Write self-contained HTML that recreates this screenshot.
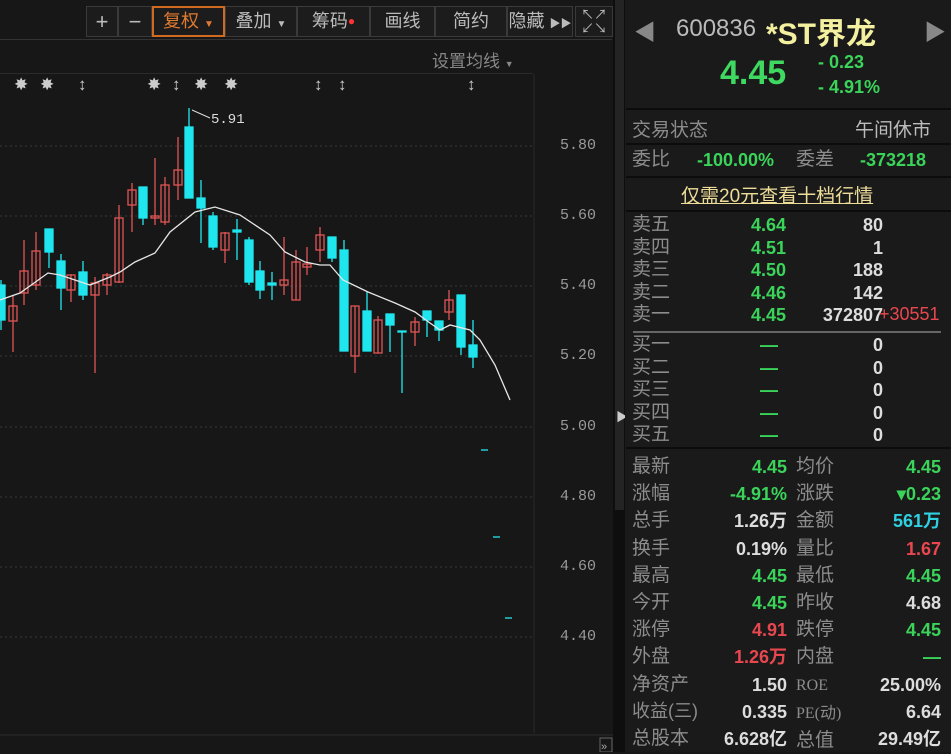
<!DOCTYPE html>
<html><head><meta charset="utf-8"><style>
*{margin:0;padding:0;box-sizing:border-box}
body{width:951px;height:752px;background:#171717;overflow:hidden;position:relative;font-family:"Liberation Sans","Noto Sans CJK SC",sans-serif}
.a{position:absolute;white-space:nowrap}
.lbl{color:#8c8c8c;font-size:19px}
.g{color:#3bd45a;font-weight:bold}
.w{color:#ddd;font-weight:bold}
.r{color:#e8474f;font-weight:bold}
.c{color:#2fd0e0;font-weight:bold}
.btn{position:absolute;top:6px;height:31px;border:1px solid #3a3a3a;color:#bbb;font-size:18px;text-align:center;line-height:29px;background:#1c1c1c}
.ax{position:absolute;left:560px;color:#9a9a9a;font-family:"Liberation Mono",monospace;font-size:15px}
.m{position:absolute;top:75px;color:#ccc;font-size:17px}
</style></head><body>
<div class="a" style="left:0;top:39px;width:612px;height:1px;background:#333"></div>
<div class="a" style="left:0;top:73px;width:533px;height:1px;background:#2a2a2a"></div>
<div class="btn" style="left:86px;width:32px;font-size:22px">+</div>
<div class="btn" style="left:118px;width:34px;font-size:22px">−</div>
<div class="btn" style="left:152px;width:73px;border:2px solid #d06a20;color:#e07a30;line-height:27px">复权 <span style="font-size:10px">▼</span></div>
<div class="btn" style="left:225px;width:72px">叠加 <span style="font-size:10px">▼</span></div>
<div class="btn" style="left:297px;width:73px">筹码<span style="color:#f33;font-size:12px;vertical-align:top">●</span></div>
<div class="btn" style="left:370px;width:65px">画线</div>
<div class="btn" style="left:435px;width:72px">简约</div>
<div class="btn" style="left:507px;width:66px">隐藏 <span style="font-size:11px">▶▶</span></div>
<div class="btn" style="left:575px;width:38px;font-size:13px;line-height:14px;padding-top:1px">↖↗<br>↙↘</div>
<div class="a" style="left:432px;top:47px;color:#888;font-size:17px">设置均线 <span style="font-size:9px">▼</span></div>
<div class="m" style="left:14px">✸</div>
<div class="m" style="left:40px">✸</div>
<div class="m" style="left:78px">↕</div>
<div class="m" style="left:147px">✸</div>
<div class="m" style="left:172px">↕</div>
<div class="m" style="left:194px">✸</div>
<div class="m" style="left:224px">✸</div>
<div class="m" style="left:314px">↕</div>
<div class="m" style="left:338px">↕</div>
<div class="m" style="left:467px">↕</div>
<svg class="a" style="left:0;top:0" width="613" height="752">
<g stroke="#3a3a3a" stroke-dasharray="2,3" stroke-width="1">
<line x1="0" y1="146" x2="533" y2="146"/><line x1="0" y1="216" x2="533" y2="216"/><line x1="0" y1="286" x2="533" y2="286"/><line x1="0" y1="356" x2="533" y2="356"/><line x1="0" y1="427" x2="533" y2="427"/><line x1="0" y1="497" x2="533" y2="497"/><line x1="0" y1="567" x2="533" y2="567"/><line x1="0" y1="637" x2="533" y2="637"/>
</g>
<line x1="534" y1="74" x2="534" y2="733" stroke="#2a2a2a"/>
<line x1="0" y1="735" x2="613" y2="735" stroke="#2e2e2e"/>
<rect x="600" y="738" width="12" height="14" fill="none" stroke="#666"/>
<text x="601" y="750" fill="#aaa" font-size="11">»</text>
<g stroke="#e05555" fill="none" stroke-width="1.3">
<line x1="13" y1="295" x2="13" y2="352"/><rect x="9" y="306" width="8" height="15"/>
<line x1="24" y1="240" x2="24" y2="305"/><rect x="20" y="271" width="8" height="22"/>
<line x1="36" y1="232" x2="36" y2="290"/><rect x="32" y="251" width="8" height="34"/>
<line x1="71" y1="274" x2="71" y2="302"/><rect x="67" y="275" width="8" height="15"/>
<line x1="95" y1="277" x2="95" y2="373"/><rect x="91" y="283" width="8" height="12"/>
<line x1="107" y1="273" x2="107" y2="295"/><rect x="103" y="275" width="8" height="10"/>
<line x1="119" y1="205" x2="119" y2="283"/><rect x="115" y="218" width="8" height="64"/>
<line x1="132" y1="183" x2="132" y2="232"/><rect x="128" y="190" width="8" height="15"/>
<line x1="155" y1="158" x2="155" y2="225"/><rect x="151" y="216" width="8" height="2"/>
<line x1="165" y1="177" x2="165" y2="225"/><rect x="161" y="185" width="8" height="37"/>
<line x1="178" y1="137" x2="178" y2="200"/><rect x="174" y="170" width="8" height="15"/>
<line x1="225" y1="232" x2="225" y2="263"/><rect x="221" y="233" width="8" height="17"/>
<line x1="284" y1="237" x2="284" y2="295"/><rect x="280" y="280" width="8" height="5"/>
<line x1="296" y1="250" x2="296" y2="300"/><rect x="292" y="262" width="8" height="38"/>
<line x1="307" y1="247" x2="307" y2="275"/><rect x="303" y="264" width="8" height="3"/>
<line x1="320" y1="227" x2="320" y2="262"/><rect x="316" y="235" width="8" height="15"/>
<line x1="355" y1="306" x2="355" y2="373"/><rect x="351" y="306" width="8" height="50"/>
<line x1="378" y1="316" x2="378" y2="353"/><rect x="374" y="320" width="8" height="33"/>
<line x1="415" y1="317" x2="415" y2="346"/><rect x="411" y="322" width="8" height="10"/>
<line x1="449" y1="290" x2="449" y2="320"/><rect x="445" y="300" width="8" height="12"/>
</g>
<g stroke="#1fe6ee" fill="#1fe6ee" stroke-width="1.3">
<line x1="1" y1="280" x2="1" y2="330"/><rect x="-3" y="285" width="8" height="35"/>
<line x1="49" y1="229" x2="49" y2="268"/><rect x="45" y="229" width="8" height="23"/>
<line x1="61" y1="254" x2="61" y2="310"/><rect x="57" y="261" width="8" height="27"/>
<line x1="83" y1="261" x2="83" y2="300"/><rect x="79" y="272" width="8" height="23"/>
<line x1="143" y1="187" x2="143" y2="225"/><rect x="139" y="187" width="8" height="31"/>
<line x1="189" y1="108" x2="189" y2="198"/><rect x="185" y="127" width="8" height="71"/>
<line x1="201" y1="180" x2="201" y2="243"/><rect x="197" y="198" width="8" height="10"/>
<line x1="213" y1="212" x2="213" y2="250"/><rect x="209" y="216" width="8" height="31"/>
<line x1="237" y1="219" x2="237" y2="260"/><rect x="233" y="230" width="8" height="2"/>
<line x1="249" y1="237" x2="249" y2="285"/><rect x="245" y="240" width="8" height="42"/>
<line x1="260" y1="261" x2="260" y2="299"/><rect x="256" y="271" width="8" height="19"/>
<line x1="272" y1="272" x2="272" y2="300"/><rect x="268" y="283" width="8" height="2"/>
<line x1="332" y1="237" x2="332" y2="262"/><rect x="328" y="237" width="8" height="21"/>
<line x1="344" y1="240" x2="344" y2="351"/><rect x="340" y="250" width="8" height="101"/>
<line x1="367" y1="292" x2="367" y2="351"/><rect x="363" y="311" width="8" height="40"/>
<line x1="390" y1="314" x2="390" y2="352"/><rect x="386" y="314" width="8" height="11"/>
<line x1="402" y1="331" x2="402" y2="393"/><rect x="398" y="331" width="8" height="1"/>
<line x1="427" y1="311" x2="427" y2="337"/><rect x="423" y="311" width="8" height="9"/>
<line x1="439" y1="321" x2="439" y2="341"/><rect x="435" y="321" width="8" height="9"/>
<line x1="461" y1="295" x2="461" y2="355"/><rect x="457" y="295" width="8" height="52"/>
<line x1="473" y1="320" x2="473" y2="368"/><rect x="469" y="345" width="8" height="12"/>
<line x1="481" y1="450" x2="488" y2="450"/><line x1="493" y1="537" x2="500" y2="537"/><line x1="505" y1="618" x2="512" y2="618"/>
</g>
<polyline fill="none" stroke="#e6e6e6" stroke-width="1.3" points="0,300 20,293 48,273 60,275 90,285 110,277 120,272 135,262 155,253 170,232 195,212 215,207 240,215 270,235 285,252 305,262 320,265 330,265 343,280 368,292 395,303 415,312 430,323 440,330 450,325 470,330 480,340 495,365 510,400"/>
<line x1="192" y1="110" x2="210" y2="118" stroke="#ddd"/>
<text x="211" y="123" fill="#ddd" font-family="Liberation Mono" font-size="14">5.91</text>
</svg>
<div class="ax" style="top:137px">5.80</div><div class="ax" style="top:207px">5.60</div><div class="ax" style="top:277px">5.40</div><div class="ax" style="top:347px">5.20</div><div class="ax" style="top:418px">5.00</div><div class="ax" style="top:488px">4.80</div><div class="ax" style="top:558px">4.60</div><div class="ax" style="top:628px">4.40</div>
<div class="a" style="left:613px;top:0;width:12px;height:752px;background:#0e0e0e"></div>
<div class="a" style="left:615px;top:0;width:9px;height:510px;background:#242424"></div>
<div class="a" style="left:616px;top:408px;color:#ccc;font-size:12px">▶</div>
<div class="a" style="left:625px;top:0;width:326px;height:752px;background:#1a1a1a"></div>
<div class="a" style="left:626px;top:108px;width:325px;height:2px;background:#0c0c0c"></div>
<div class="a" style="left:626px;top:143px;width:325px;height:2px;background:#0c0c0c"></div>
<div class="a" style="left:626px;top:176px;width:325px;height:2px;background:#0c0c0c"></div>
<div class="a" style="left:626px;top:210px;width:325px;height:2px;background:#0c0c0c"></div>
<div class="a" style="left:626px;top:447px;width:325px;height:2px;background:#0c0c0c"></div>
<div class="a" style="left:633px;top:331px;width:308px;height:2px;background:#666"></div>
<div class="a" style="left:634px;top:15px;color:#888;font-size:22px">◀</div>
<div class="a" style="left:924px;top:15px;color:#888;font-size:22px">▶</div>
<div class="a" style="left:676px;top:15px;color:#bbb;font-size:24px">600836</div>
<div class="a" style="left:766px;top:9px;color:#f3f0a0;font-size:30px;font-weight:bold">*ST界龙</div>
<div class="a g" style="left:720px;top:54px;font-size:34px;color:#3fd860">4.45</div>
<div class="a g" style="left:818px;top:52px;font-size:18px">- 0.23</div>
<div class="a g" style="left:818px;top:77px;font-size:18px">- 4.91%</div>
<div class="a lbl" style="left:632px;top:115px">交易状态</div>
<div class="a" style="left:855px;top:115px;color:#bbb;font-size:19px">午间休市</div>
<div class="a lbl" style="left:632px;top:147px;line-height:26px">委比</div>
<div class="a g" style="left:697px;top:147px;font-size:18px;line-height:26px">-100.00%</div>
<div class="a lbl" style="left:796px;top:147px;line-height:26px">委差</div>
<div class="a g" style="left:860px;top:147px;font-size:18px;line-height:26px">-373218</div>
<div class="a" style="left:681px;top:181px;color:#eedd99;font-size:19px;text-decoration:underline">仅需20元查看十档行情</div>
<div class="a lbl" style="left:632px;top:214px;line-height:22.5px;white-space:normal;width:40px">卖五<br>卖四<br>卖三<br>卖二<br>卖一</div>
<div class="a g" style="left:744px;top:214px;line-height:22.5px;font-size:18px;text-align:right;width:42px">4.64<br>4.51<br>4.50<br>4.46<br>4.45</div>
<div class="a w" style="left:800px;top:214px;line-height:22.5px;font-size:18px;text-align:right;width:83px">80<br>1<br>188<br>142<br>372807</div>
<div class="a r" style="left:879px;top:304px;font-size:18px;font-weight:normal">+30551</div>
<div class="a lbl" style="left:632px;top:334px;line-height:22.5px;white-space:normal;width:40px">买一<br>买二<br>买三<br>买四<br>买五</div>
<div class="a g" style="left:760px;top:334px;line-height:22.5px;font-size:18px">—<br>—<br>—<br>—<br>—</div>
<div class="a w" style="left:800px;top:334px;line-height:22.5px;font-size:18px;text-align:right;width:83px">0<br>0<br>0<br>0<br>0</div>
<div class="a lbl" style="left:632px;top:453px;line-height:27.2px;white-space:normal;width:90px">最新<br>涨幅<br>总手<br>换手<br>最高<br>今开<br>涨停<br>外盘<br>净资产<br><span style="font-size:18px">收益(三)</span><br>总股本</div>
<div class="a" style="left:680px;top:454px;line-height:27.2px;font-size:18px;text-align:right;width:107px;font-weight:bold"><span class="g">4.45</span><br><span class="g">-4.91%</span><br><span class="w">1.26万</span><br><span class="w">0.19%</span><br><span class="g">4.45</span><br><span class="g">4.45</span><br><span class="r">4.91</span><br><span class="r">1.26万</span><br><span class="w">1.50</span><br><span class="w">0.335</span><br><span class="w">6.628亿</span></div>
<div class="a lbl" style="left:796px;top:453px;line-height:27.2px;white-space:normal;width:80px">均价<br>涨跌<br>金额<br>量比<br>最低<br>昨收<br>跌停<br>内盘<br><span style="font-family:'Liberation Serif';font-size:16px">ROE</span><br><span style="font-family:'Liberation Serif';font-size:16px">PE(动)</span><br>总值</div>
<div class="a" style="left:840px;top:454px;line-height:27.2px;font-size:18px;text-align:right;width:101px;font-weight:bold"><span class="g">4.45</span><br><span class="g">▾0.23</span><br><span class="c">561万</span><br><span class="r">1.67</span><br><span class="g">4.45</span><br><span class="w">4.68</span><br><span class="g">4.45</span><br><span class="g">—</span><br><span class="w">25.00%</span><br><span class="w">6.64</span><br><span class="w">29.49亿</span></div>
</body></html>
